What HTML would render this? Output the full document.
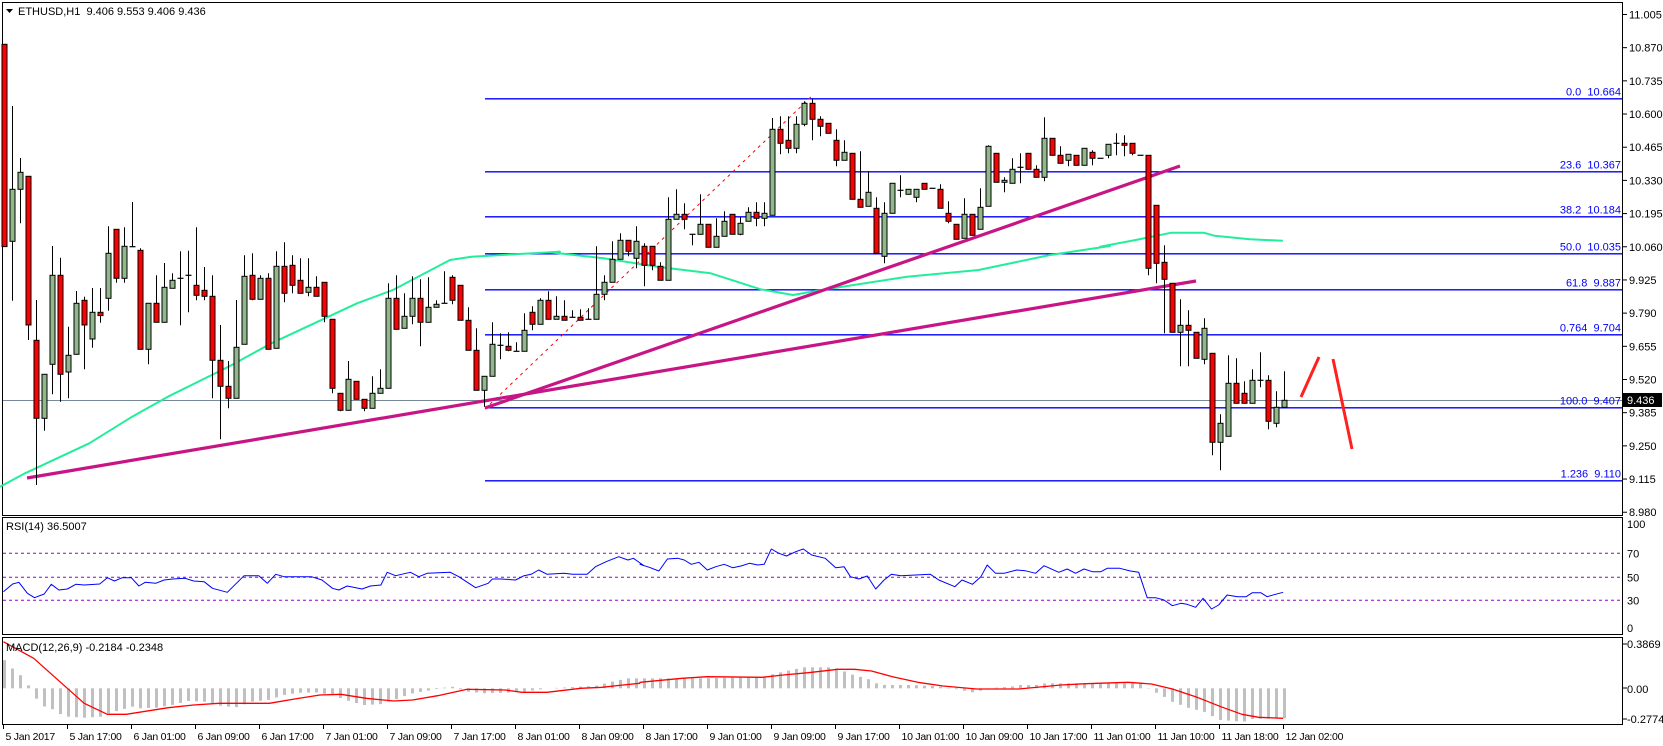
<!DOCTYPE html>
<html><head><meta charset="utf-8"><style>
html,body{margin:0;padding:0;background:#fff;width:1663px;height:746px;overflow:hidden}
svg{display:block}
text{font-family:"Liberation Sans",sans-serif;font-size:11px}
text.tl{font-size:10.5px;letter-spacing:-0.25px}
</style></head><body>
<svg id="s" width="1663" height="746" xmlns="http://www.w3.org/2000/svg"></svg>
<script>
var C=[
['r',133,740,133,740],['g',568,724,318,902],['g',517,568,474,670],['r',529,975,529,1020],['r',1021,1255,900,1455],['g',1123,1255,1123,1292],['g',826,1093,738,1183],['r',826,1123,773,1205],['g',1066,1116,980,1195],['g',910,1063,873,1063],
['r',901,975,890,1108],['g',937,1017,864,1043],['r',937,947,864,968],['g',760,895,679,932],['r',688,835,688,848],['g',739,835,682,848],['d',740,740,606,740],['r',751,1048,745,1048],['g',910,1048,910,1093],['r',910,967,826,967],
['g',862,967,789,967],['g',841,865,820,865],['d',835,835,754,976],['d',826,826,752,937],['r',856,886,682,901],['r',871,889,801,901],['r',889,1081,826,1195],['r',1081,1159,975,1318],['r',1159,1195,1083,1225],['g',1042,1195,900,1195],
['g',829,1033,766,1033],['r',826,898,760,901],['g',835,898,826,898],['r',835,1048,820,1048],['g',799,1045,754,1045],['r',799,880,727,907],['r',796,856,766,880],['r',841,880,775,880],['g',862,877,775,889],['r',862,889,829,889],
['r',847,949,847,967],['r',958,1165,958,1180],['r',1180,1231,1180,1234],['g',1138,1231,1083,1231],['r',1144,1198,1144,1198],['r',1198,1225,1198,1234],['g',1180,1225,1129,1225],['g',1165,1180,1108,1180],['g',895,1165,850,1165],['r',895,988,826,988],
['g',949,985,880,985],['g',895,949,829,973],['r',895,967,838,1039],['g',922,967,832,967],['g',913,922,901,922],['d',910,910,814,910],['r',832,901,826,913],['r',856,961,856,961],['r',961,1051,922,1051],['r',1051,1171,985,1171],
['g',1129,1171,1129,1220],['g',1033,1129,967,1129],['d',1036,1036,1000,1078],['r',1039,1051,997,1054],['d',1054,1054,1027,1054],['g',991,1054,940,1054],['r',937,973,919,991],['g',901,973,895,973],['r',901,958,874,958],['g',949,958,889,958],
['r',949,961,901,961],['d',952,952,931,952],['r',952,961,928,961],['d',958,958,925,958],['g',883,958,739,958],['g',847,883,826,901],['g',778,847,724,847],['g',721,778,700,778],['r',721,754,721,769],['g',724,775,679,805],
['r',739,796,730,859],['r',739,796,739,811],['r',799,841,787,841],['g',658,841,592,841],['g',643,658,568,658],['r',643,658,610,688],['d',703,703,703,736],['g',673,703,583,703],['r',673,742,673,742],['g',709,742,655,742],
['g',664,709,634,709],['r',643,703,643,703],['g',670,703,652,706],['g',637,664,622,664],['r',637,655,607,679],['g',640,655,607,679],['g',388,646,354,646],['r',388,430,349,463],['r',421,445,349,460],['g',373,445,349,460],
['g',310,373,304,379],['r',310,358,298,421],['r',358,379,349,409],['r',370,400,370,400],['r',421,481,388,499],['g',457,481,421,481],['r',460,598,460,598],['r',598,622,454,622],['g',577,619,514,619],['r',625,760,592,760],
['g',640,769,607,790],['g',550,640,550,640],['d',571,571,526,592],['g',568,583,568,583],['g',568,592,568,607],['r',550,568,550,568],['d',565,565,565,565],['r',568,625,553,625],['r',640,664,604,670],['r',673,718,673,718],
['g',643,715,595,715],['r',643,706,643,706],['g',622,688,565,688],['g',439,619,436,619],['r',460,547,460,547],['g',541,547,532,577],['g',508,550,475,550],['d',502,502,460,550],['r',460,508,460,508],['r',508,532,496,532],
['g',415,532,352,544],['r',415,466,415,466],['r',466,490,439,490],['g',463,481,463,499],['r',466,496,466,496],['g',445,496,445,496],['r',457,475,451,496],['d',475,475,475,475],['g',433,466,433,475],
['d',430,430,400,466],['r',430,436,406,469],['r',430,460,430,466],['d',466,466,466,466],['r',466,805,466,826],['r',616,790,616,850],['r',787,838,736,1000],['r',850,997,850,997],['g',976,997,898,1099],['r',976,991,931,1099],
['r',997,1075,997,1075],['g',985,1078,955,1093],['r',1060,1327,1060,1366],['g',1270,1327,1243,1411],['g',1150,1309,1066,1309],['r',1150,1210,1075,1210],['r',1180,1210,1144,1210],['g',1141,1210,1108,1210],['d',1141,1141,1057,1162],['r',1141,1264,1126,1288],
['g',1222,1270,1174,1282],['g',1201,1222,1114,1222]];
var o=[];
function L(x1,y1,x2,y2,c,w,extra){o.push('<line x1="'+x1+'" y1="'+y1+'" x2="'+x2+'" y2="'+y2+'" stroke="'+c+'" stroke-width="'+(w||1)+'" '+(extra||'')+'/>');}
function T(x,y,t,c,a,cl){o.push('<text x="'+x+'" y="'+y+'" fill="'+(c||'#000')+'"'+(a?' text-anchor="'+a+'"':'')+(cl?' class="'+cl+'"':'')+'>'+t+'</text>');}
function P(pts,c,w,sx,x0,y0,sy){var s=pts.map(function(p){return (x0+p[0]/sx).toFixed(1)+','+(y0+p[1]/sy).toFixed(1)}).join(' ');o.push('<polyline points="'+s+'" fill="none" stroke="'+c+'" stroke-width="'+w+'" stroke-linejoin="round"/>');}
o.push('<rect x="2.5" y="2.5" width="1620" height="513" fill="none" stroke="#000"/>');
o.push('<rect x="2.5" y="517.5" width="1620" height="117" fill="none" stroke="#000"/>');
o.push('<rect x="2.5" y="637.5" width="1620" height="87" fill="none" stroke="#000"/>');
function py(v){return 98.3+(10.664-v)*245.8;}
var labs=['11.005','10.870','10.735','10.600','10.465','10.330','10.195','10.060','9.925','9.790','9.655','9.520','9.385','9.250','9.115','8.980'];
labs.forEach(function(l){var y=py(parseFloat(l));L(1623,y,1627,y,'#000');T(1629,y+4,l);});
L(3,400.5,1622,400.5,'#778899',1);
var fib=[[98.3,'0.0  10.664'],[171.3,'23.6  10.367'],[216.3,'38.2  10.184'],[253.3,'50.0  10.035'],[289.3,'61.8  9.887'],[334.3,'0.764  9.704'],[407.3,'100.0  9.407'],[480.3,'1.236  9.110']];
fib.forEach(function(f){L(485,f[0]+.5,1622,f[0]+.5,'#0000ff',1.3);o.push('<text x="1621" y="'+(f[0]-3)+'" fill="#0000ff" text-anchor="end" xml:space="preserve">'+f[1]+'</text>');});
L(485,409,812,96,'#ff0000',1,'stroke-dasharray="3,4"');
var ma=[[0,1460],[70,1420],[250,1330],[370,1250],[470,1190],[640,1100],[760,1030],[1000,910],[1100,870],[1260,780],[1320,770],[1568,755]].map(function(p){return [p[0]/2.8,p[1]]});
[[0,757],[150,775],[300,800],[450,820],[590,868],[680,885],[760,870],[1000,830],[1200,810],[1400,765],[1568,738]].forEach(function(p){ma.push([550+p[0]/2.8,p[1]])});
[[0,740],[100,720],[200,698],[290,698],[320,707],[420,718],[512,722]].forEach(function(p){ma.push([1100+p[0]/2.8,p[1]])});
P(ma,'#22ee9a',2,1,0,0,3);
L(27,478,1196,281,'#c71585',3.2);
L(485,408,1180,166,'#c71585',3.2);
C.forEach(function(c,i){var x=Math.round(3.6+i*8)+.5;var a=c[1]/3,b=c[2]/3,wt=c[3]/3,wb=c[4]/3;
 L(x,wt.toFixed(1),x,wb.toFixed(1),'#000',1);
 if(c[0]=='d'){L(x-3,a.toFixed(1),x+3,a.toFixed(1),'#000',1.2);}
 else{o.push('<rect x="'+(x-2.5)+'" y="'+a.toFixed(1)+'" width="5" height="'+Math.max(1,b-a).toFixed(1)+'" fill="'+(c[0]=='g'?'#8fb98b':'#ff0000')+'" stroke="#000" stroke-width="1"/>');}
});
L(1301,397,1319,357,'#ff2020',3);L(1333,359,1352,449,'#ff2020',3);
o.push('<rect x="1622" y="393" width="40" height="14" fill="#000"/>');T(1627,404,'9.436','#fff');
o.push('<polygon points="6,9 13,9 9.5,13" fill="#000"/>');
o.push('<text x="18" y="15" xml:space="preserve">ETHUSD,H1  9.406 9.553 9.406 9.436</text>');
[[553.3,'70'],[577.3,'50'],[600.3,'30']].forEach(function(d){L(3,d[0],1622,d[0],'#9400d3',1,'stroke-dasharray="3,3"');T(1627,d[0]+4,d[1]);});
T(1627,528,'100');T(1627,632,'0');
T(6,530,'RSI(14) 36.5007');
var r1=[[8,230],[30,207],[45,202],[65,235],[82,248],[105,237],[122,208],[140,225],[160,222],[180,208],[200,210],[237,207],[255,188],[272,198],[290,188],[312,188],[330,213],[345,202],[370,205],[390,195],[410,192],[440,190],[460,198],[485,200],[505,220],[540,232],[580,182],[615,182],[635,205],[655,178],[675,185],[710,185],[740,185],[765,195],[790,220],[805,225],[825,213],[860,222],[880,213],[905,210],[920,172],[940,182],[975,172],[995,185],[1015,175],[1070,172],[1090,185],[1130,218],[1160,205],[1170,192],[1190,192],[1225,195],[1245,182],[1262,178],[1280,165],[1300,178],[1340,175],[1360,178],[1395,178],[1415,155],[1440,140],[1470,125],[1492,135],[1505,130],[1530,152]].map(function(p){return [p[0]/2.376,p[1]]});
[[0,148],[22,157],[45,168],[65,132],[90,130],[105,135],[122,148],[140,142],[160,165],[180,155],[200,148],[220,158],[240,153],[260,145],[280,150],[295,148],[312,102],[330,115],[348,123],[370,110],[388,102],[408,120],[440,130],[465,158],[485,155],[500,185],[520,192],[540,183],[560,222],[580,195],[597,178],[620,182],[690,178],[710,195],[748,215],[765,195],[790,208],[810,185],[825,150],[845,175],[865,175],[895,165],[915,167],[940,175],[960,152],[995,172],[1015,162],[1035,175],[1055,162],[1075,170],[1095,170],[1110,160],[1140,160],[1165,168],[1185,172],[1205,248],[1225,248],[1245,255],[1265,272],[1285,265],[1300,268],[1320,277],[1338,250],[1358,282],[1375,270],[1395,240],[1420,245],[1440,245],[1455,233],[1475,233],[1490,245],[1510,238],[1528,232]].forEach(function(p){r1.push([640+p[0]/2.376,p[1]])});
P(r1,'#0000ff',1,1,0,515,3);
var h=[[8,435],[27,460],[45,478],[65,510],[85,552],[104,575],[122,582],[141,597],[160,605],[199,608],[237,605],[255,595],[293,582],[312,575],[331,580],[370,578],[407,570],[445,558],[483,560],[520,572],[558,577],[597,560],[635,555],[673,540],[710,533],[748,532],[787,540],[825,557],[862,570],[900,568],[940,552],[977,535],[1015,527],[1053,518],[1072,515],[1110,530],[1148,535],[1205,533],[1243,530],[1300,520],[1376,515],[1415,512],[1452,500],[1490,490],[1548,490]].map(function(p){return [p[0]/2.376,p[1]]});
[[0,490],[150,490],[300,485],[312,478],[350,467],[388,457],[445,457],[465,460],[500,478],[540,492],[560,505],[580,510],[640,510],[700,513],[740,520],[787,532],[805,528],[820,520],[880,515],[900,510],[940,510],[960,505],[1190,505],[1205,520],[1243,545],[1262,560],[1300,578],[1338,590],[1376,615],[1432,620],[1452,612],[1528,610]].forEach(function(p){h.push([640+p[0]/2.376,p[1]])});
function interp(x){for(var i=0;i<h.length-1;i++){if(x>=h[i][0]&&x<=h[i+1][0]){var t=(x-h[i][0])/(h[i+1][0]-h[i][0]||1);return h[i][1]+t*(h[i+1][1]-h[i][1]);}}return h[h.length-1][1];}
for(var i=0;i<161;i++){var x=3.6+i*8;var v=515+interp(x)/3;var z=688.3;var t=Math.min(v,z),bb=Math.max(v,z);o.push('<rect x="'+(Math.round(x)-1)+'" y="'+t.toFixed(1)+'" width="3" height="'+(bb-t).toFixed(1)+'" fill="#c0c0c0"/>');}
var sg=[[8,380],[80,430],[160,520],[200,565],[255,598],[300,598],[400,578],[460,570],[520,565],[640,565],[700,552],[760,540],[810,538],[870,550],[935,558],[980,555],[1040,542],[1110,523],[1200,525],[1240,532],[1300,532],[1380,520],[1430,517],[1480,510],[1520,505]].map(function(p){return [p[0]/2.376,p[1]]});
[[0,502],[100,490],[160,485],[290,487],[340,480],[400,473],[470,463],[510,463],[550,468],[600,485],[660,502],[720,513],[800,522],[900,522],[1000,510],[1060,506],[1160,502],[1215,507],[1265,522],[1320,545],[1380,575],[1430,598],[1470,607],[1528,610]].forEach(function(p){sg.push([640+p[0]/2.376,p[1]])});
P(sg,'#ff0000',1.3,1,0,515,3);
T(6,651,'MACD(12,26,9) -0.2184 -0.2348');
T(1627,648,'0.3869');T(1627,693,'0.00');T(1627,723,'-0.2774');
[644,688,719].forEach(function(y){L(1623,y,1627,y,'#000');});
var tl=['5 Jan 2017','5 Jan 17:00','6 Jan 01:00','6 Jan 09:00','6 Jan 17:00','7 Jan 01:00','7 Jan 09:00','7 Jan 17:00','8 Jan 01:00','8 Jan 09:00','8 Jan 17:00','9 Jan 01:00','9 Jan 09:00','9 Jan 17:00','10 Jan 01:00','10 Jan 09:00','10 Jan 17:00','11 Jan 01:00','11 Jan 10:00','11 Jan 18:00','12 Jan 02:00'];
tl.forEach(function(t,i){var x=Math.round(3.4+i*64)+.5;L(x,725,x,729,'#000');T(x+2,740,t,'#000',null,'tl');});
document.getElementById('s').innerHTML=o.join('');
</script>
</body></html>
